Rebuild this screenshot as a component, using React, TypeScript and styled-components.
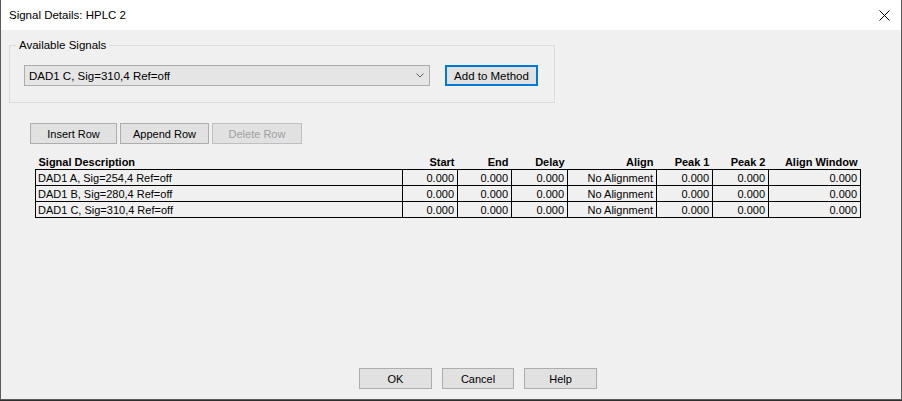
import React from 'react';
import styled, { createGlobalStyle } from 'styled-components';

const GlobalStyle = createGlobalStyle`
    html, body {
        margin: 0;
        padding: 0;
        background: #2e2e2e;
    }
    * {
        box-sizing: border-box;
    }
`;

const Window = styled.div`
    width: 902px;
    height: 400px;
    display: flex;
    flex-direction: column;
    border: 1px solid #5a5a5a;
    border-top: none;
    background: #f0f0f0;
    font-family: 'Liberation Sans', Arial, sans-serif;
    color: #000;
`;

const TitleBar = styled.div`
    height: 30px;
    flex: none;
    display: flex;
    align-items: center;
    justify-content: space-between;
    background: #fff;
    padding: 0 10px 0 8px;
    font-size: 11.5px;
`;

const CloseButton = styled.div`
    width: 14px;
    height: 14px;
    display: flex;
    align-items: center;
    justify-content: center;
`;

const Client = styled.div`
    flex: 1;
    display: flex;
    flex-direction: column;
    align-items: flex-start;
`;

const GroupBox = styled.div`
    position: relative;
    margin: 15px 0 0 8px;
    width: 546px;
    height: 58px;
    border: 1px solid #dcdcdc;
    display: flex;
    align-items: flex-start;
    gap: 15px;
    padding: 19px 0 0 14px;
`;

const GroupLabel = styled.span`
    position: absolute;
    top: -8px;
    left: 6px;
    padding: 0 3px;
    background: #f0f0f0;
    font-size: 11.5px;
    line-height: 14px;
`;

const ComboBox = styled.div`
    width: 406px;
    height: 21px;
    display: flex;
    align-items: center;
    justify-content: space-between;
    padding: 0 5px 0 4px;
    background: #e5e5e5;
    border: 1px solid #adadad;
    font-size: 11.5px;
`;

const Button = styled.button<{ $width: number; $focused?: boolean }>`
    flex: none;
    width: ${(p) => p.$width}px;
    height: 21px;
    padding: 0;
    margin: 0;
    background: #e1e1e1;
    border: ${(p) => (p.$focused ? '2px solid #0078d7' : '1px solid #adadad')};
    font-family: 'Liberation Sans', Arial, sans-serif;
    font-size: ${(p) => (p.$focused ? '11.5px' : '11px')};
    color: #000;
    &:disabled {
        color: #a0a0a0;
        border-color: #bfbfbf;
    }
`;

const RowButtons = styled.div`
    display: flex;
    gap: 3px;
    margin: 20px 0 0 29px;
`;

const Grid = styled.table`
    margin: 11px 0 0 34px;
    width: 826px;
    border-collapse: collapse;
    table-layout: fixed;
    font-size: 11px;
`;

const HeadCell = styled.th<{ $left?: boolean }>`
    height: 14px;
    line-height: 14px;
    padding: 0 3px 0 3px;
    font-weight: bold;
    text-align: ${(p) => (p.$left ? 'left' : 'right')};
    white-space: nowrap;
`;

const Cell = styled.td<{ $left?: boolean }>`
    height: 16px;
    line-height: 14px;
    padding: 0 3px 0 2px;
    border: 1px solid #000;
    text-align: ${(p) => (p.$left ? 'left' : 'right')};
    white-space: nowrap;
    overflow: hidden;
`;

const Footer = styled.div`
    margin: auto 0 10px 358px;
    display: flex;
    gap: 10px;
`;

const columns = [
    { title: 'Signal Description', width: 367, left: true },
    { title: 'Start', width: 55 },
    { title: 'End', width: 54 },
    { title: 'Delay', width: 56 },
    { title: 'Align', width: 89 },
    { title: 'Peak 1', width: 56 },
    { title: 'Peak 2', width: 56 },
    { title: 'Align Window', width: 92 },
];

const signals = [
    'DAD1 A, Sig=254,4 Ref=off',
    'DAD1 B, Sig=280,4 Ref=off',
    'DAD1 C, Sig=310,4 Ref=off',
];

const App = () => (
    <>
        <GlobalStyle />
        <Window>
            <TitleBar>
                <span>Signal Details: HPLC 2</span>
                <CloseButton>
                    <svg width="11" height="11" viewBox="0 0 11 11">
                        <path d="M0.5 0.5 L10.5 10.5 M10.5 0.5 L0.5 10.5" stroke="#000" strokeWidth="1" />
                    </svg>
                </CloseButton>
            </TitleBar>
            <Client>
                <GroupBox>
                    <GroupLabel>Available Signals</GroupLabel>
                    <ComboBox>
                        <span>DAD1 C, Sig=310,4 Ref=off</span>
                        <svg width="8" height="5" viewBox="0 0 8 5">
                            <path d="M0.5 0.5 L4 4 L7.5 0.5" stroke="#606060" strokeWidth="1" fill="none" />
                        </svg>
                    </ComboBox>
                    <Button $width={93} $focused>Add to Method</Button>
                </GroupBox>
                <RowButtons>
                    <Button $width={87}>Insert Row</Button>
                    <Button $width={89}>Append Row</Button>
                    <Button $width={90} disabled>Delete Row</Button>
                </RowButtons>
                <Grid>
                    <colgroup>
                        {columns.map((c) => (
                            <col key={c.title} style={{ width: c.width }} />
                        ))}
                    </colgroup>
                    <thead>
                        <tr>
                            {columns.map((c) => (
                                <HeadCell key={c.title} $left={c.left}>{c.title}</HeadCell>
                            ))}
                        </tr>
                    </thead>
                    <tbody>
                        {signals.map((s) => (
                            <tr key={s}>
                                <Cell $left>{s}</Cell>
                                <Cell>0.000</Cell>
                                <Cell>0.000</Cell>
                                <Cell>0.000</Cell>
                                <Cell>No Alignment</Cell>
                                <Cell>0.000</Cell>
                                <Cell>0.000</Cell>
                                <Cell>0.000</Cell>
                            </tr>
                        ))}
                    </tbody>
                </Grid>
                <Footer>
                    <Button $width={73}>OK</Button>
                    <Button $width={72}>Cancel</Button>
                    <Button $width={73}>Help</Button>
                </Footer>
            </Client>
        </Window>
    </>
);

export default App;
